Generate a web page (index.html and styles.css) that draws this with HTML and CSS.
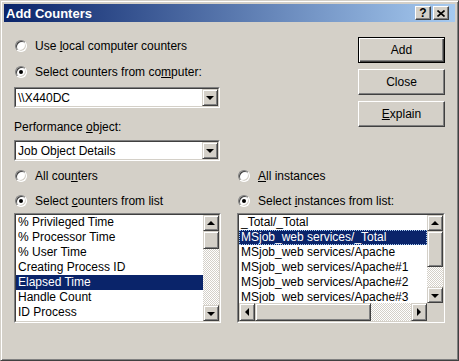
FILE: index.html
```html
<!DOCTYPE html>
<html lang="en">
<head>
    <meta charset="UTF-8">
    <title>Add Counters</title>
    <link rel="stylesheet" href="styles.css">
</head>
<body>

<div class="window">
    <div class="titlebar">
        <span class="title">Add Counters</span>
        <div class="caption-btns">
            <span class="cap-btn help">?</span>
            <span class="cap-btn">
                <svg width="8" height="7" viewBox="0 0 8 7"><path d="M0.5 0.5 L7.5 6.5 M7.5 0.5 L0.5 6.5" stroke="#000" stroke-width="1.6"/></svg>
            </span>
        </div>
    </div>

    <div class="content">
        <div class="top">
            <div class="source">
                <div class="radio-row"><span class="radio"></span><span>Use <u>l</u>ocal computer counters</span></div>
                <div class="radio-row second"><span class="radio checked"></span><span>Select counters from co<u>m</u>puter:</span></div>
                <div class="combo first-combo">
                    <div class="combo-inner">
                        <span class="combo-text">\\X440DC</span>
                        <span class="sb-btn"><span class="arrow down"></span></span>
                    </div>
                </div>
                <div class="field-label">Performance <u>o</u>bject:</div>
                <div class="combo second-combo">
                    <div class="combo-inner">
                        <span class="combo-text">Job Object Details</span>
                        <span class="sb-btn"><span class="arrow down"></span></span>
                    </div>
                </div>
            </div>
            <div class="actions">
                <div class="btn default"><span>Add</span></div>
                <div class="btn"><span>Close</span></div>
                <div class="btn"><span><u>E</u>xplain</span></div>
            </div>
        </div>

        <div class="lists">
            <div class="pane">
                <div class="radio-row"><span class="radio"></span><span>All cou<u>n</u>ters</span></div>
                <div class="radio-row second"><span class="radio checked"></span><span>Select <u>c</u>ounters from list</span></div>
                <div class="listbox">
                    <div class="listbox-inner">
                        <div class="list-main">
                            <div class="items">
                                <div class="item">% Privileged Time</div>
                                <div class="item">% Processor Time</div>
                                <div class="item">% User Time</div>
                                <div class="item">Creating Process ID</div>
                                <div class="item selected">Elapsed Time</div>
                                <div class="item">Handle Count</div>
                                <div class="item">ID Process</div>
                            </div>
                            <div class="vscroll">
                                <span class="sb-btn"><span class="arrow up"></span></span>
                                <span class="thumb counters-thumb"></span>
                                <span class="track"></span>
                                <span class="sb-btn"><span class="arrow down"></span></span>
                            </div>
                        </div>
                    </div>
                </div>
            </div>

            <div class="pane">
                <div class="radio-row"><span class="radio"></span><span><u>A</u>ll instances</span></div>
                <div class="radio-row second"><span class="radio checked"></span><span>Select <u>i</u>nstances from list:</span></div>
                <div class="listbox">
                    <div class="listbox-inner">
                        <div class="list-main short">
                            <div class="items">
                                <div class="item">_Total/_Total</div>
                                <div class="item selected focus">MSjob_web services/_Total</div>
                                <div class="item">MSjob_web services/Apache</div>
                                <div class="item">MSjob_web services/Apache#1</div>
                                <div class="item">MSjob_web services/Apache#2</div>
                                <div class="item">MSjob_web services/Apache#3</div>
                            </div>
                            <div class="vscroll">
                                <span class="sb-btn"><span class="arrow up"></span></span>
                                <span class="thumb instances-thumb"></span>
                                <span class="track"></span>
                                <span class="sb-btn"><span class="arrow down"></span></span>
                            </div>
                        </div>
                        <div class="hscroll-row">
                            <span class="sb-btn"><span class="arrow left"></span></span>
                            <span class="thumb h-thumb"></span>
                            <span class="track"></span>
                            <span class="sb-btn"><span class="arrow right"></span></span>
                            <span class="corner"></span>
                        </div>
                    </div>
                </div>
            </div>
        </div>
    </div>
</div>

</body>
</html>
```

FILE: styles.css
```css
body {
    margin: 0;
    background: #d4d0c8;
    font-family: "Liberation Sans", Arial, sans-serif;
    font-size: 12px;
    color: #000;
}

.window {
    width: 459px;
    height: 361px;
    box-sizing: border-box;
    border: 1px solid;
    border-color: #d4d0c8 #404040 #404040 #d4d0c8;
    box-shadow: inset 1px 1px #fff, inset -1px -1px #808080;
    padding: 3px;
    background: #d4d0c8;
}

/* title bar */
.titlebar {
    height: 18px;
    display: flex;
    align-items: center;
    justify-content: space-between;
    padding: 0 6px 0 2px;
    background: linear-gradient(to right, #0a246a, #a6caf0);
}
.title {
    color: #fff;
    font-weight: bold;
    font-size: 13px;
}
.caption-btns {
    display: flex;
    gap: 2px;
}
.cap-btn {
    width: 16px;
    height: 14px;
    box-sizing: border-box;
    display: flex;
    align-items: center;
    justify-content: center;
    background: #d4d0c8;
    border: 1px solid;
    border-color: #fff #404040 #404040 #fff;
    box-shadow: inset -1px -1px #808080;
}
.cap-btn.help {
    font-weight: bold;
    font-size: 12px;
    line-height: 1;
}

.content {
    padding: 15px 10px 0 10px;
}

.top {
    display: flex;
    justify-content: space-between;
}
.source {
    width: 206px;
}

/* radio rows */
.radio-row {
    height: 18px;
    display: flex;
    align-items: center;
    gap: 8px;
    white-space: nowrap;
}
.radio-row.second {
    margin-top: 8px;
}
.radio {
    position: relative;
    width: 12px;
    height: 12px;
    margin-left: 1px;
    box-sizing: border-box;
    border-radius: 50%;
    border: 1px solid;
    border-color: #808080 #fff #fff #808080;
    background: #fff;
    box-shadow: inset 1px 1px #404040, inset -1px -1px #d4d0c8;
}
.radio.checked::after {
    content: "";
    position: absolute;
    left: 3px;
    top: 3px;
    width: 4px;
    height: 4px;
    border-radius: 50%;
    background: #000;
}

/* combo boxes */
.combo {
    height: 21px;
    box-sizing: border-box;
    border: 1px solid;
    border-color: #808080 #fff #fff #808080;
}
.first-combo {
    margin-top: 6px;
}
.second-combo {
    margin-top: 5px;
}
.combo-inner {
    height: 100%;
    box-sizing: border-box;
    border: 1px solid;
    border-color: #404040 #d4d0c8 #d4d0c8 #404040;
    background: #fff;
    display: flex;
    align-items: center;
}
.combo-text {
    flex: 1;
    padding-left: 2px;
}
.combo .sb-btn {
    width: 16px;
    height: 17px;
}
.field-label {
    height: 16px;
    line-height: 16px;
    margin-top: 11px;
}

/* buttons */
.actions {
    width: 87px;
    display: flex;
    flex-direction: column;
    gap: 6px;
}
.btn {
    height: 26px;
    box-sizing: border-box;
    border: 1px solid;
    border-color: #fff #404040 #404040 #fff;
    box-shadow: inset -1px -1px #808080;
    display: flex;
    align-items: center;
    justify-content: center;
}
.btn.default {
    border: 1px solid #000;
    box-shadow: inset 1px 1px #fff, inset -1px -1px #404040, inset -2px -2px #808080;
}

/* lists */
.lists {
    display: grid;
    grid-template-columns: 207px 208px;
    justify-content: space-between;
    margin-top: 6px;
}
.pane .radio-row.second {
    margin-top: 7px;
}
.listbox {
    margin-top: 3px;
    height: 110px;
    box-sizing: border-box;
    border: 1px solid;
    border-color: #808080 #fff #fff #808080;
}
.listbox-inner {
    height: 106px;
    border: 1px solid;
    border-color: #404040 #d4d0c8 #d4d0c8 #404040;
    background: #fff;
}
.list-main {
    height: 106px;
    display: flex;
}
.list-main.short {
    height: 88px;
}
.items {
    flex: 1;
    overflow: hidden;
    min-width: 0;
}
.item {
    height: 15px;
    line-height: 15px;
    padding-left: 2px;
    white-space: nowrap;
}
.item.selected {
    background: #0a246a;
    color: #fff;
}
.item.focus {
    outline: 1px dotted #a6caf0;
    outline-offset: -1px;
}

/* scroll bars */
.vscroll {
    width: 16px;
    display: flex;
    flex-direction: column;
}
.hscroll-row {
    height: 18px;
    display: flex;
    background: #d4d0c8;
}
.corner {
    width: 16px;
    background: #d4d0c8;
}
.sb-btn,
.thumb {
    flex: none;
    width: 16px;
    height: 16px;
    box-sizing: border-box;
    background: #d4d0c8;
    border: 1px solid;
    border-color: #d4d0c8 #404040 #404040 #d4d0c8;
    box-shadow: inset 1px 1px #fff, inset -1px -1px #808080;
    display: flex;
    align-items: center;
    justify-content: center;
}
.hscroll-row .sb-btn,
.hscroll-row .thumb {
    height: 18px;
}
.counters-thumb {
    height: 18px;
}
.instances-thumb {
    height: 36px;
}
.hscroll-row .h-thumb {
    width: 116px;
}
.track {
    flex: 1;
    background: repeating-conic-gradient(#fff 0 25%, #d4d0c8 0 50%) 0 0 / 2px 2px;
}
.arrow {
    width: 0;
    height: 0;
    border: 4px solid transparent;
}
.arrow.down {
    border-top-color: #000;
    border-bottom-width: 0;
    margin-top: 1px;
}
.arrow.up {
    border-bottom-color: #000;
    border-top-width: 0;
}
.arrow.left {
    border-right-color: #000;
    border-left-width: 0;
}
.arrow.right {
    border-left-color: #000;
    border-right-width: 0;
}
```
